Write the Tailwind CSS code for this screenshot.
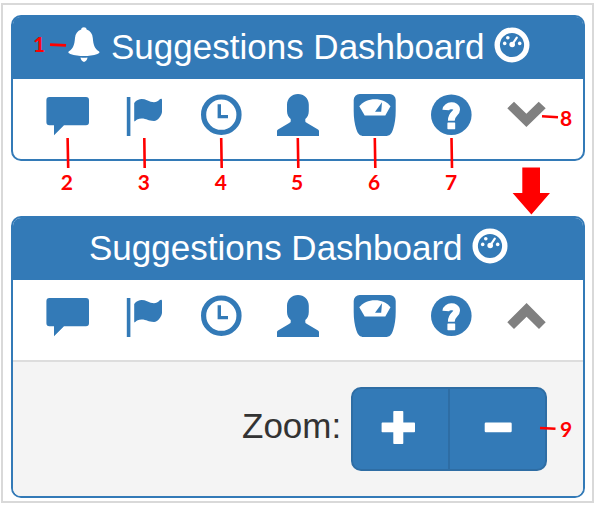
<!DOCTYPE html>
<html lang="en">
<head>
<meta charset="utf-8">
<title>Suggestions Dashboard</title>
<script src="https://cdn.jsdelivr.net/npm/@tailwindcss/browser@4"></script>
</head>
<body class="bg-white w-[598px] h-[507px] overflow-hidden font-['Liberation_Sans',Arial,sans-serif]">
<!-- Shared icon symbols -->
<svg class="hidden">
  <symbol id="gauge" viewBox="0 0 36 36">
    <circle cx="18" cy="18" r="14.8" fill="none" stroke="#fff" stroke-width="5.4"/>
    <circle cx="10.7" cy="16.4" r="1.8" fill="#fff"/><circle cx="13.8" cy="10.8" r="1.8" fill="#fff"/>
    <circle cx="25.7" cy="16.4" r="1.8" fill="#fff"/><circle cx="18.2" cy="17.5" r="2.8" fill="#fff"/>
    <path d="M18.2 17.5L22.8 10.6" stroke="#fff" stroke-width="2.2" stroke-linecap="round"/>
  </symbol>
  <symbol id="comment" viewBox="0 0 48 48"><path d="M5.4 6H42a3 3 0 0 1 3 3V31.3a3 3 0 0 1-3 3H20L10 44.3V34.3H5.4a3 3 0 0 1-3-3V9a3 3 0 0 1 3-3z"/></symbol>
  <symbol id="flag" viewBox="0 0 48 48"><path d="M5.8 6H9.4V45H5.8zM13.2 12C17 7 22 7.5 26 9.2C31 11.6 35.5 12.2 38.5 8.6C39.7 7.2 41 7.5 41 9V20.8C41 24 37 30 33 30C27 30 26 27.6 20.5 27.6C17.5 27.6 15.5 28.8 14.3 30C13.5 30.7 13.2 30.5 13.2 29.6z"/></symbol>
  <symbol id="clock" viewBox="0 0 48 48"><circle cx="24.3" cy="23.7" r="17.7" fill="none" stroke="#337ab7" stroke-width="5.2"/><path d="M20.6 13.3h3.4V24h7v3.3H20.6z"/></symbol>
  <symbol id="user" viewBox="0 0 48 48"><path d="M24 3C30 3 34.8 7.5 34.8 13.8V20C34.8 23.5 33.5 26.5 31.3 28V30C31.3 31 32 31.5 33 32L44 38.5C44.8 39 45 39.6 45 40.5V45H3V40.5C3 39.6 3.2 39 4 38.5L15 32C16 31.5 16.7 31 16.7 30V28C14.5 26.5 13 23.5 13 20V13.8C13 7.5 18 3 24 3z"/></symbol>
  <symbol id="scale" viewBox="0 0 48 48"><path d="M8.7 3H38.7a6 6 0 0 1 6 6V20C44.7 27 43.8 33 42 38.5C40.5 43 38.5 45 34.5 45H12.9C8.9 45 6.9 43 5.4 38.5C3.6 33 2.7 27 2.7 20V9a6 6 0 0 1 6-6z"/><path fill="#fff" d="M8.3 15.3C12 10.5 17.5 8.2 24 8.2S36 10.5 39.5 15.3L34.3 24.4H13.7z"/><path d="M31 11.3L24 20.8H30.2z"/></symbol>
  <symbol id="help" viewBox="0 0 48 48"><circle cx="24.3" cy="23.7" r="20.3"/><path d="M18.8 19C19 13.8 29.6 13 29.6 18.7C29.6 23 24.3 22.4 24.3 29.7" fill="none" stroke="#fff" stroke-width="6.8"/><rect x="20.4" y="31.4" width="7.8" height="6.8" rx=".6" fill="#fff"/></symbol>
</svg>

<div class="relative w-[598px] h-[507px] pt-[3px] pl-px">
  <div class="w-[593px] h-[500px] border-2 border-[#d9d9d9] pt-[10px] pl-[8px] flex flex-col gap-[55px]">

    <section class="w-[574px] h-[146px] shrink-0 border-2 border-[#337ab7] rounded-[10px] bg-white">
      <header class="bg-[#337ab7] h-[62px] rounded-t-[7px] flex items-center pl-[55px] text-white text-[35px] leading-[40px]">
        <svg class="w-[32px] h-[36px] shrink-0 -mt-[6px]" viewBox="0 0 32 36" fill="#fff"><path d="M13.2 2.6C13.2-.6 18.6-.6 18.6 2.6C22.4 4 24.4 7 24.8 11C25.4 18 26.6 21.5 30.8 24.2C32.3 25.6 31 26.4 29.5 27C21 29.8 11 29.8 2.3 27C.8 26.4-.5 25.6 1 24.2C5.2 21.5 6.4 18 7 11C7.4 7 9.4 4 13.2 2.6zM12.5 30.4Q16 31.3 19.5 30.4Q19.2 33.8 16 35Q12.8 33.8 12.5 30.4z"/></svg>
        <h1 class="ml-[11px] whitespace-nowrap w-[375px] shrink-0 -mt-[2px]">Suggestions Dashboard</h1>
        <svg class="w-[36px] h-[36px] shrink-0 ml-[8px] -mt-[6px]"><use href="#gauge"/></svg>
      </header>
      <nav class="pt-[12px] pl-[31px] w-[539px] flex justify-between" style="fill:#337ab7">
        <svg class="w-[48px] h-[48px] shrink-0"><use href="#comment"/></svg>
        <svg class="w-[48px] h-[48px] shrink-0"><use href="#flag"/></svg>
        <svg class="w-[48px] h-[48px] shrink-0"><use href="#clock"/></svg>
        <svg class="w-[48px] h-[48px] shrink-0"><use href="#user"/></svg>
        <svg class="w-[48px] h-[48px] shrink-0"><use href="#scale"/></svg>
        <svg class="w-[48px] h-[48px] shrink-0"><use href="#help"/></svg>
        <svg class="w-[48px] h-[48px] shrink-0" viewBox="0 0 48 48"><path fill="#808080" d="M3.3 17.3L10 10.7L22.4 22.7L34.7 10.7L41.7 17.3L22.4 36z"/></svg>
      </nav>
    </section>

    <section class="w-[574px] h-[282px] shrink-0 border-2 border-[#337ab7] rounded-[10px] bg-white flex flex-col overflow-hidden">
      <header class="bg-[#337ab7] h-[62px] shrink-0 flex items-center pl-[76px] text-white text-[35px] leading-[40px]">
        <h1 class="whitespace-nowrap w-[375px] shrink-0 -mt-[2px]">Suggestions Dashboard</h1>
        <svg class="w-[36px] h-[36px] shrink-0 ml-[8px] -mt-[6px]"><use href="#gauge"/></svg>
      </header>
      <nav class="pt-[12px] pl-[31px] h-[80px] shrink-0 w-[539px] flex justify-between" style="fill:#337ab7">
        <svg class="w-[48px] h-[48px] shrink-0"><use href="#comment"/></svg>
        <svg class="w-[48px] h-[48px] shrink-0"><use href="#flag"/></svg>
        <svg class="w-[48px] h-[48px] shrink-0"><use href="#clock"/></svg>
        <svg class="w-[48px] h-[48px] shrink-0"><use href="#user"/></svg>
        <svg class="w-[48px] h-[48px] shrink-0"><use href="#scale"/></svg>
        <svg class="w-[48px] h-[48px] shrink-0"><use href="#help"/></svg>
        <svg class="w-[48px] h-[48px] shrink-0" viewBox="0 0 48 48"><path fill="#808080" d="M3.3 30.3L10 37L22.6 24.7L35 37L41.7 30.3L22.6 11z"/></svg>
      </nav>
      <div class="grow bg-[#f4f4f4] border-t-2 border-[#dddddd] flex items-start pt-[25px] pl-[229px]">
        <span class="text-[35px] leading-[40px] text-[#333] w-[109px] shrink-0 mt-[19px]">Zoom:</span>
        <div class="flex h-[84px] w-[196px] shrink-0">
          <button class="w-[98px] h-full bg-[#337ab7] border-2 border-r border-[#2e6da4] rounded-l-[10px]"><svg class="w-[94px] h-[80px]" viewBox="0.7 0.9 94 80"><path fill="#fff" d="M41.8 22.8h8.4a.8.8 0 0 1 .8.8v10.9h10.9a.8.8 0 0 1 .8.8v8.1a.8.8 0 0 1-.8.8H51v10.9a.8.8 0 0 1-.8.8h-8.4a.8.8 0 0 1-.8-.8V44.2H30.1a.8.8 0 0 1-.8-.8v-8.1a.8.8 0 0 1 .8-.8H41V23.6a.8.8 0 0 1 .8-.8z"/></svg></button>
          <button class="w-[98px] h-full bg-[#337ab7] border-2 border-l border-[#2e6da4] rounded-r-[10px]"><svg class="w-[94px] h-[80px]" viewBox="0 0.9 94 80"><rect x="34.7" y="34.5" width="27" height="9.7" rx="1.2" fill="#fff"/></svg></button>
        </div>
      </div>
    </section>
  </div>

  <!-- Callout numbers, leader lines and arrow over the panels -->
  <svg class="absolute left-0 top-0 w-[598px] h-[507px] font-[Lato,sans-serif] text-[21px] font-bold" viewBox="0 0 598 507" fill="#f00" text-anchor="middle">
    <path fill="none" stroke="#f00" stroke-width="2.6" d="M50 44.6L66 45.4M67.6 138L68.2 168M144.3 138L144.7 168M221.2 138L221.7 168M297.8 138L298.3 168M374.8 138L375.3 168M451.5 138L452 168M542 116.3L558 117.3M540 428L555.5 428.8"/>
    <path d="M522.3 167.5H540V193H550L531.4 214.5L512.6 193H522.3z"/>
    <g style="font-family:Lato,sans-serif"><text x="39" y="52">1</text><text x="66.8" y="190">2</text><text x="143.8" y="190">3</text><text x="220.8" y="190">4</text><text x="297" y="190">5</text><text x="374" y="190">6</text><text x="451" y="190">7</text><text x="566" y="125.5">8</text><text x="566.2" y="437">9</text></g>
  </svg>
</div>
</body>
</html>
